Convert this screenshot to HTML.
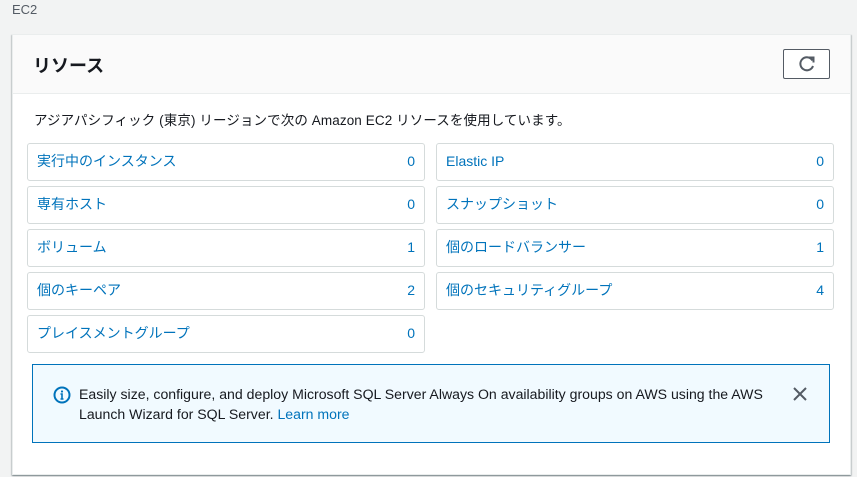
<!DOCTYPE html>
<html><head><meta charset="utf-8"><style>
body{margin:0;width:857px;height:477px;background:#f2f3f3;font-family:"Liberation Sans","Noto Sans CJK JP",sans-serif;position:relative;overflow:hidden;color:#16191f}
.crumb{position:absolute;left:12px;top:2px;font-size:13px;color:#545b64}
.card{position:absolute;left:12px;top:34px;width:837px;height:439px;background:#fff;border:1px solid #eaeded;box-shadow:0 1px 1px rgba(0,28,36,.3),1px 1px 1px rgba(0,28,36,.15),-1px 1px 1px rgba(0,28,36,.15)}
.hdr{position:absolute;left:0;top:0;right:0;height:58px;background:#fafafa;border-bottom:1px solid #eaeded}
.title{position:absolute;left:20px;top:17px;font-size:18px;font-weight:bold}
.btn{position:absolute;left:770px;top:14px;width:45px;height:28px;border:1px solid #545b64;border-radius:2px;background:#fff}
.desc{position:absolute;left:21px;top:74px;font-size:13.5px;letter-spacing:0.1px}
.tile{position:absolute;width:396px;height:36px;border:1px solid #d5dbdb;border-radius:3px;font-size:14px;color:#0073bb;line-height:34px}
.tile span{position:absolute;left:9px}.tile b{position:absolute;right:9px;font-weight:normal}
.alert{position:absolute;left:19px;top:329px;width:796px;height:77px;background:#f1faff;border:1px solid #0073bb}
.at{position:absolute;left:46px;top:19px;font-size:14.1px;line-height:20px;color:#16191f;width:715px}
.at a{color:#0073bb;text-decoration:none}
</style></head><body>
<div class="crumb">EC2</div>
<div class="card">
<div class="hdr"><div class="title">リソース</div>
<div class="btn"><svg width="45" height="28" viewBox="0 0 45 28"><path d="M28.5 10.5 A6.5 6.5 0 1 0 29 16" fill="none" stroke="#545b64" stroke-width="2"/><path d="M24.5 7.5 L29.5 7.5 L29.5 12.5" fill="none" stroke="#545b64" stroke-width="2"/></svg></div></div>
<div class="desc">アジアパシフィック (東京) リージョンで次の Amazon EC2 リソースを使用しています。</div>
<div class="tile" style="left:14px;top:108px"><span>実行中のインスタンス</span><b>0</b></div>
<div class="tile" style="left:423px;top:108px"><span>Elastic IP</span><b>0</b></div>
<div class="tile" style="left:14px;top:151px"><span>専有ホスト</span><b>0</b></div>
<div class="tile" style="left:423px;top:151px"><span>スナップショット</span><b>0</b></div>
<div class="tile" style="left:14px;top:194px"><span>ボリューム</span><b>1</b></div>
<div class="tile" style="left:423px;top:194px"><span>個のロードバランサー</span><b>1</b></div>
<div class="tile" style="left:14px;top:237px"><span>個のキーペア</span><b>2</b></div>
<div class="tile" style="left:423px;top:237px"><span>個のセキュリティグループ</span><b>4</b></div>
<div class="tile" style="left:14px;top:280px"><span>プレイスメントグループ</span><b>0</b></div>
<div class="alert">
<svg style="position:absolute;left:20px;top:21px" width="18" height="18" viewBox="0 0 18 18"><circle cx="9" cy="9" r="7.5" fill="none" stroke="#0073bb" stroke-width="2"/><circle cx="9" cy="5.5" r="1.1" fill="#0073bb"/><path d="M7.5 8h1.5v5M7.5 13h3" stroke="#0073bb" stroke-width="1.6" fill="none"/></svg>
<div class="at">Easily size, configure, and deploy Microsoft SQL Server Always On availability groups on AWS using the AWS Launch Wizard for SQL Server. <a>Learn more</a></div>
<svg style="position:absolute;left:760px;top:22px" width="14" height="14" viewBox="0 0 14 14"><path d="M1 1L13 13M13 1L1 13" stroke="#545b64" stroke-width="2"/></svg>
</div>
</div>
</body></html>
